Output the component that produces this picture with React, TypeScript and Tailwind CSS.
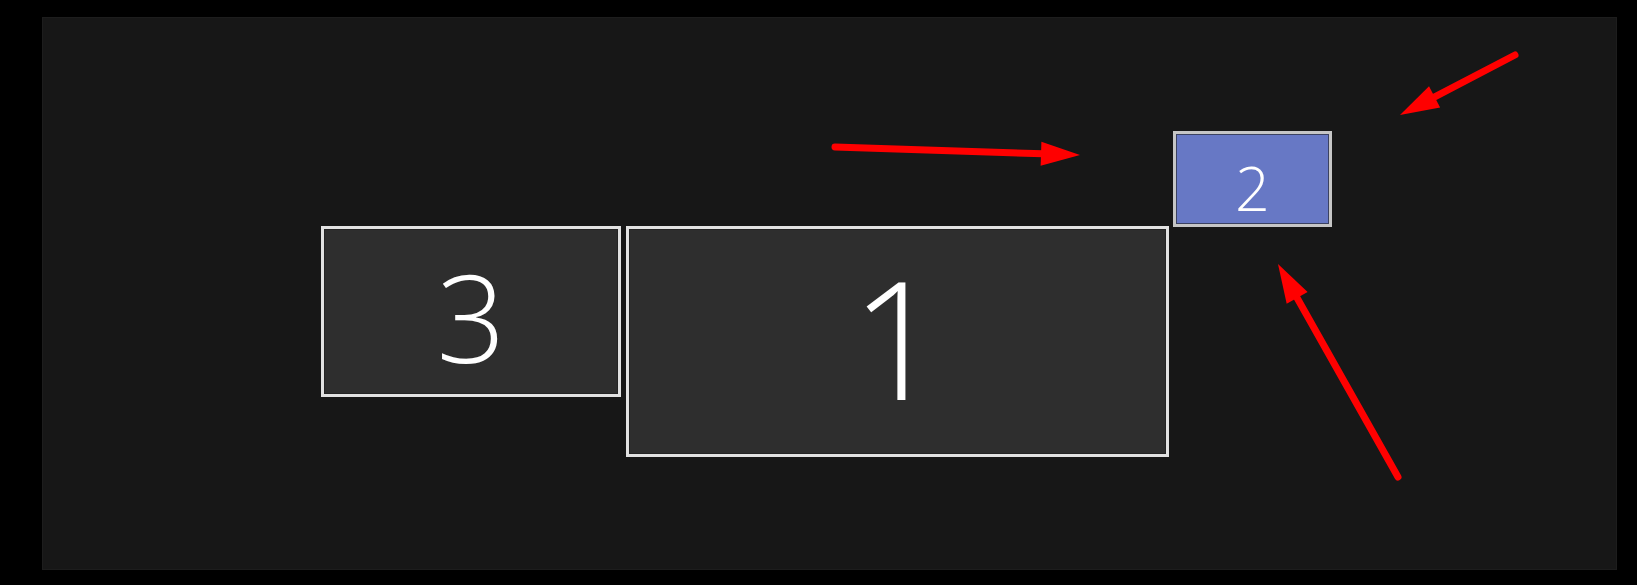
import React from "react";

type ArrowProps = { x1: number; y1: number; x2: number; y2: number };

// red annotation arrow: tail (x1,y1) -> tip (x2,y2)
const Arrow: React.FC<ArrowProps> = ({ x1, y1, x2, y2 }) => {
  const dx = x2 - x1;
  const dy = y2 - y1;
  const len = Math.hypot(dx, dy);
  const ux = dx / len;
  const uy = dy / len;
  const head = 39;
  const half = 12;
  const bx = x2 - ux * head;
  const by = y2 - uy * head;
  const pts = [
    `${x2},${y2}`,
    `${bx - uy * half},${by + ux * half}`,
    `${bx + uy * half},${by - ux * half}`,
  ].join(" ");
  return (
    <g>
      <line
        x1={x1}
        y1={y1}
        x2={bx + ux * 2}
        y2={by + uy * 2}
        stroke="#ff0000"
        strokeWidth={7}
        strokeLinecap="round"
      />
      <polygon points={pts} fill="#ff0000" />
    </g>
  );
};

interface MonitorProps {
  label: string;
  active?: boolean;
  className: string;
  textClass: string;
}

const Monitor: React.FC<MonitorProps> = ({ label, active = false, className, textClass }) => {
  return (
    <div
      className={`absolute flex items-center justify-center border-[3px] ${
        active ? "border-[#c6c6c6] bg-[#6778c5]" : "border-[#e2e2e2] bg-[#2e2e2e]"
      } ${className}`}
    >
      <div className="absolute inset-0 border border-[#1e1e1e] opacity-60" />
      <span
        className={`font-[350] leading-none text-white ${textClass}`}
        style={{ fontFamily: '"Open Sans", "Noto Sans", sans-serif' }}
      >
        {label}
      </span>
    </div>
  );
};

export default function App() {
  return (
    <div className="h-[585px] w-[1637px] bg-black pl-[42px] pr-[20px] pt-[17px] pb-[15px]">
      <div className="relative h-full w-full border border-[#1d1d1d] bg-[#171717]">
        {/* display arrangement canvas */}
        <Monitor label="3" className="left-[278px] top-[208px] h-[171px] w-[300px]" textClass="text-[121px] pt-[10px]" />
        <Monitor label="1" className="left-[583px] top-[208px] h-[231px] w-[543px]" textClass="text-[164px] mb-[10px]" />
        <Monitor label="2" active className="left-[1130px] top-[113px] h-[96px] w-[159px]" textClass="text-[61px] pt-[16px]" />

        <svg className="pointer-events-none absolute inset-0 h-full w-full">
          <Arrow x1={792} y1={129} x2={1037} y2={137} />
          <Arrow x1={1472} y1={37} x2={1357} y2={97} />
          <Arrow x1={1355} y1={459} x2={1235} y2={246} />
        </svg>
      </div>
    </div>
  );
}
